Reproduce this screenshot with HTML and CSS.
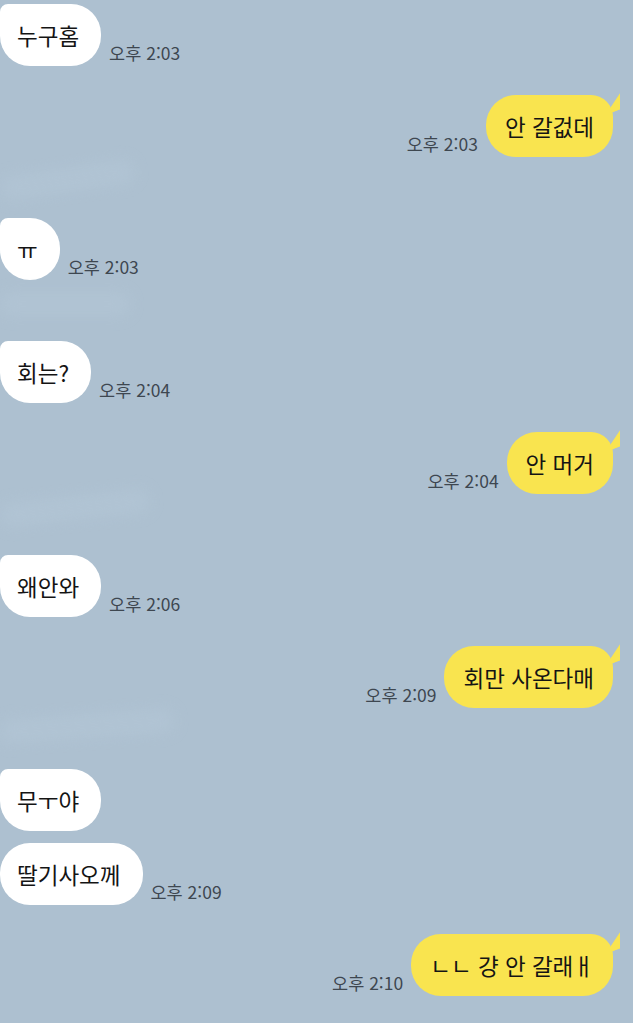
FILE: index.html
```html
<!DOCTYPE html>
<html lang="ko">
<head>
    <meta charset="UTF-8">
    <meta name="viewport" content="width=device-width, initial-scale=1.0">
    <title>채팅</title>
    <link rel="stylesheet" href="styles.css">
</head>
<body>
    <div class="chat">
        <div class="row left">
            <div class="bubble">누구홈</div>
            <span class="time">오후 2:03</span>
        </div>
        <div class="row right gap-m">
            <span class="time">오후 2:03</span>
            <div class="bubble">안 갈겂데</div>
        </div>
        <div class="row left gap-l">
            <div class="bubble">ㅠ</div>
            <span class="time">오후 2:03</span>
        </div>
        <div class="row left gap-l">
            <div class="bubble">회는?</div>
            <span class="time">오후 2:04</span>
        </div>
        <div class="row right gap-m">
            <span class="time">오후 2:04</span>
            <div class="bubble">안 머거</div>
        </div>
        <div class="row left gap-l">
            <div class="bubble">왜안와</div>
            <span class="time">오후 2:06</span>
        </div>
        <div class="row right gap-m">
            <span class="time">오후 2:09</span>
            <div class="bubble">회만 사온다매</div>
        </div>
        <div class="row left gap-l">
            <div class="bubble">무ㅜ야</div>
        </div>
        <div class="row left gap-s">
            <div class="bubble plain">딸기사오께</div>
            <span class="time">오후 2:09</span>
        </div>
        <div class="row right gap-m">
            <span class="time">오후 2:10</span>
            <div class="bubble">ㄴㄴ 걍 안 갈래ㅐ</div>
        </div>

        <!-- 가려진 부분 -->
        <div class="smear s1"></div>
        <div class="smear s2"></div>
        <div class="smear s3"></div>
        <div class="smear s4"></div>
    </div>
</body>
</html>
```

FILE: styles.css
```css
* {
    margin: 0;
    padding: 0;
    box-sizing: border-box;
}

body {
    font-family: 'Noto Sans CJK KR', 'Noto Sans', sans-serif;
    background: #adc0d0;
    width: 633px;
    height: 1023px;
    overflow: hidden;
}

.chat {
    position: relative;
    display: flex;
    flex-direction: column;
    padding-top: 4px;
}

.row {
    display: flex;
    align-items: flex-end;
    gap: 8px;
}

.row.right {
    justify-content: flex-end;
    padding-right: 20px;
}

.gap-s { margin-top: 12px; }
.gap-m { margin-top: 29px; }
.gap-l { margin-top: 61px; }

.bubble {
    position: relative;
    height: 62px;
    display: flex;
    align-items: center;
    padding: 0 22px 0 17px;
    border-radius: 30px;
    font-size: 22.5px;
    color: #141414;
    white-space: nowrap;
}

.left .bubble {
    background: #ffffff;
    border-top-left-radius: 8px;
}

.left .bubble.plain {
    border-top-left-radius: 30px;
}

.right .bubble {
    background: #f9e44f;
    padding: 0 19px;
    border-top-right-radius: 22px;
}

.right .bubble::after {
    content: "";
    position: absolute;
    top: 0;
    right: -7px;
    width: 0;
    height: 0;
    border-top: 10px solid transparent;
    border-right: 9px solid #f9e44f;
    border-bottom: 6px solid #f9e44f;
    transform: skewY(-20deg);
}

.time {
    font-size: 17.5px;
    color: #3e4750;
    padding-bottom: 1px;
    white-space: nowrap;
}

.smear {
    position: absolute;
    left: 0;
    height: 24px;
    border-radius: 12px;
    background: #b4c7d7;
    filter: blur(7px);
    opacity: 0.55;
}

.s1 { top: 168px; width: 135px; transform: rotate(-8deg); }
.s2 { top: 292px; width: 130px; }
.s3 { top: 496px; width: 150px; transform: rotate(-6deg); }
.s4 { top: 714px; width: 175px; transform: rotate(-4deg); }
```
